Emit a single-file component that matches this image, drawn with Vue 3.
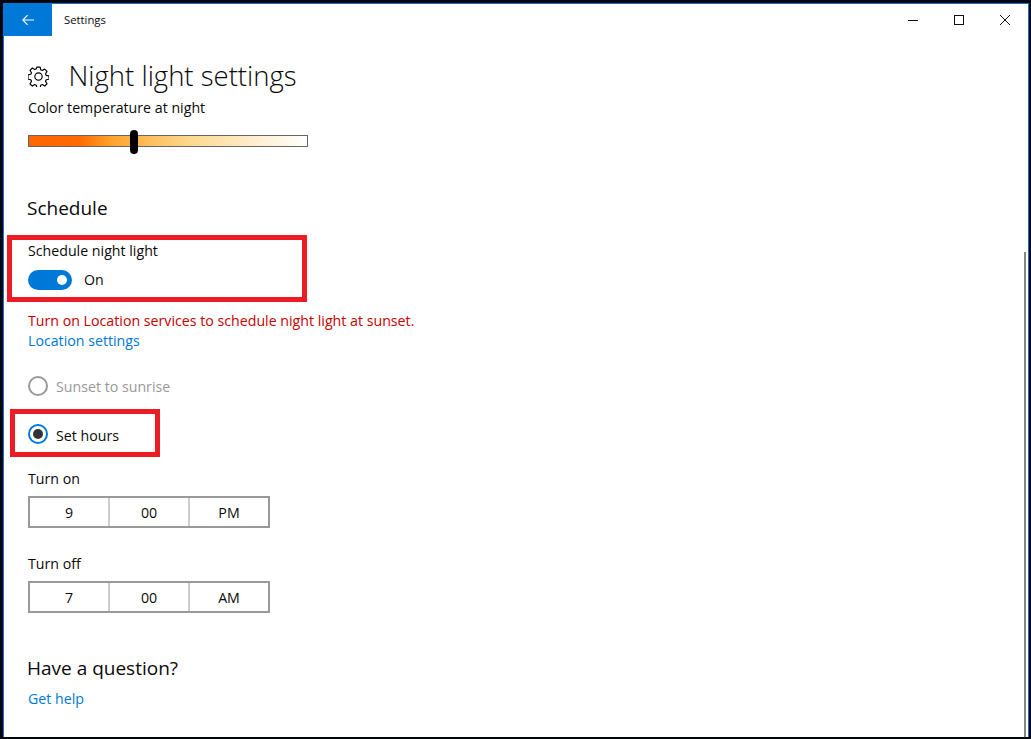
<template>
  <div class="frame">
    <div class="window">
      <div class="titlebar">
        <button class="back">
          <svg width="12" height="12" viewBox="0 0 12 12"><path d="M12 6H.8M5.6 1.2L.8 6l4.8 4.8" fill="none" stroke="#fff" stroke-width="1.1" /></svg>
        </button>
        <span class="app-name">Settings</span>
        <div class="win-controls">
          <svg width="10" height="10" viewBox="0 0 10 10"><path d="M0 5.5H10" stroke="#111" stroke-width="1" /></svg>
          <svg width="10" height="10" viewBox="0 0 10 10"><rect x="0.5" y="0.5" width="9" height="9" fill="none" stroke="#111" stroke-width="1" /></svg>
          <svg width="10" height="10" viewBox="0 0 10 10"><path d="M0 0L10 10M10 0L0 10" stroke="#111" stroke-width="1" /></svg>
        </div>
      </div>

      <div class="content">
        <div class="scrollbar"></div>

        <div class="page-head">
          <svg class="gear" width="21" height="21" viewBox="0 0 20 20">
            <path d="M8.4 1h3.2l.5 2.6 1.5.7 2.3-1.4 2.2 2.2-1.4 2.3.6 1.5 2.7.5v3.2l-2.7.5-.6 1.5 1.4 2.3-2.2 2.2-2.3-1.4-1.5.6-.5 2.7H8.4l-.5-2.7-1.5-.6-2.3 1.4-2.2-2.2 1.4-2.3-.6-1.5-2.7-.5V8.4l2.7-.5.6-1.5-1.4-2.3 2.2-2.2 2.3 1.4 1.5-.7z" fill="none" stroke="#000" stroke-width="1.1" stroke-linejoin="round" />
            <circle cx="10" cy="10" r="3.5" fill="none" stroke="#000" stroke-width="1.1" />
          </svg>
          <h1>Night light settings</h1>
        </div>

        <div class="label first">Color temperature at night</div>
        <div class="slider">
          <span class="thumb"></span>
        </div>

        <h2 class="schedule">Schedule</h2>

        <div class="mark mark-schedule">
          <div class="label">Schedule night light</div>
          <div class="toggle-row">
            <span class="toggle"><span class="knob"></span></span>
            <span class="label">On</span>
          </div>
        </div>

        <p class="warning">Turn on Location services to schedule night light at sunset.</p>
        <a class="link">Location settings</a>

        <div class="radio-row disabled">
          <span class="radio"></span>
          <span>Sunset to sunrise</span>
        </div>

        <div class="mark mark-hours">
          <div class="radio-row">
            <span class="radio checked"><span class="dot"></span></span>
            <span class="radio-text">Set hours</span>
          </div>
        </div>

        <div class="time-group" v-for="t in times" :key="t.label">
          <div class="label">{{ t.label }}</div>
          <div class="time-picker">
            <span v-for="part in t.parts" :key="part">{{ part }}</span>
          </div>
        </div>

        <h2 class="question">Have a question?</h2>
        <a class="link">Get help</a>
      </div>
    </div>
  </div>
</template>

<script setup>
const times = [
  { label: 'Turn on', parts: ['9', '00', 'PM'] },
  { label: 'Turn off', parts: ['7', '00', 'AM'] },
]
</script>

<style>
html, body {
  margin: 0;
  background: #000;
}
</style>

<style scoped>
.frame {
  width: 1031px;
  height: 739px;
  box-sizing: border-box;
  padding: 3px 2px 2px 3px;
  background: #02060c;
  overflow: hidden;
  font-family: 'Open Sans', 'Noto Sans', sans-serif;
  font-size: 14.2px;
  color: #0a0a0a;
}

.window {
  height: 100%;
  box-sizing: border-box;
  background: #fff;
  border: 1px solid #0078d7;
  border-bottom: 0;
  display: flex;
  flex-direction: column;
}

/* title bar */
.titlebar {
  display: flex;
  align-items: center;
  height: 32px;
  flex: none;
}

.back {
  width: 48px;
  height: 32px;
  padding: 0;
  border: 0;
  background: #0078d7;
  display: flex;
  align-items: center;
  justify-content: center;
}

.app-name {
  margin: 0 0 2px 12px;
  font-size: 11.3px;
}

.win-controls {
  margin-left: auto;
  display: flex;
  gap: 36px;
  padding-right: 18px;
}

/* page */
.content {
  position: relative;
  flex: 1;
  padding: 0 24px;
}

.scrollbar {
  position: absolute;
  right: 2px;
  top: 216px;
  bottom: 0;
  width: 2px;
  background: #868686;
}

.page-head {
  display: flex;
  align-items: center;
  height: 40px;
  margin-top: 20px;
}

.gear {
  margin-right: 20px;
  margin-left: -0.5px;
}

h1 {
  margin: 0;
  font-size: 27.5px;
  font-weight: 300;
  line-height: 40px;
}

h2 {
  margin: 0;
  font-size: 19px;
  font-weight: 400;
  line-height: 26px;
  margin-left: -1px;
}

.label {
  line-height: 20px;
}

.first {
  margin-top: 2px;
}

.slider {
  position: relative;
  width: 278px;
  height: 10px;
  margin-top: 17px;
  border: 1px solid #666;
  background: linear-gradient(90deg, #ff6600 0%, #ff6a00 18%, #ffa42e 30%, #fdd98f 58%, #fff 100%);
}

.thumb {
  position: absolute;
  left: 101px;
  top: -6px;
  width: 8px;
  height: 24px;
  border-radius: 4px;
  background: #000;
}

.schedule {
  margin-top: 48px;
}

.mark {
  box-sizing: border-box;
  border: 5px solid #ed1c24;
}

.mark-schedule {
  width: 300px;
  height: 67px;
  margin: 14px 0 0 -21px;
  padding: 1px 0 0 16px;
}

.toggle-row {
  display: flex;
  align-items: center;
  gap: 12px;
  margin-top: 9px;
}

.toggle {
  display: flex;
  align-items: center;
  justify-content: flex-end;
  width: 44px;
  height: 20px;
  padding-right: 5px;
  box-sizing: border-box;
  border-radius: 10px;
  background: #0078d7;
}

.knob {
  width: 10px;
  height: 10px;
  border-radius: 50%;
  background: #fff;
}

.warning {
  margin: 9px 0 0;
  line-height: 20px;
  color: #c50000;
}

.link {
  display: block;
  line-height: 20px;
  color: #0078d7;
}

.radio-row {
  display: flex;
  align-items: center;
  gap: 8px;
  height: 20px;
}

.disabled {
  margin-top: 25px;
  color: #999;
}

.radio {
  box-sizing: border-box;
  width: 20px;
  height: 20px;
  border: 2px solid #999;
  border-radius: 50%;
  display: flex;
  align-items: center;
  justify-content: center;
}

.checked {
  border-color: #0078d7;
}

.dot {
  width: 10px;
  height: 10px;
  border-radius: 50%;
  background: #333;
}

.mark-hours {
  width: 150px;
  height: 48px;
  margin: 13px 0 0 -18px;
  padding: 10px 0 0 13px;
}

.radio-text {
  padding-top: 2px;
}

.time-group {
  margin-bottom: 26px;
}

.mark-hours + .time-group {
  margin-top: 12px;
}

.time-picker {
  display: flex;
  width: 242px;
  height: 32px;
  margin-top: 7px;
  box-sizing: border-box;
  border: 2px solid #999;
}

.time-picker span {
  flex: 1;
  display: flex;
  align-items: center;
  justify-content: center;
}

.time-picker span + span {
  border-left: 2px solid #ccc;
}

.question {
  margin-top: 42px;
}

.question + .link {
  margin-top: 8px;
}
</style>
